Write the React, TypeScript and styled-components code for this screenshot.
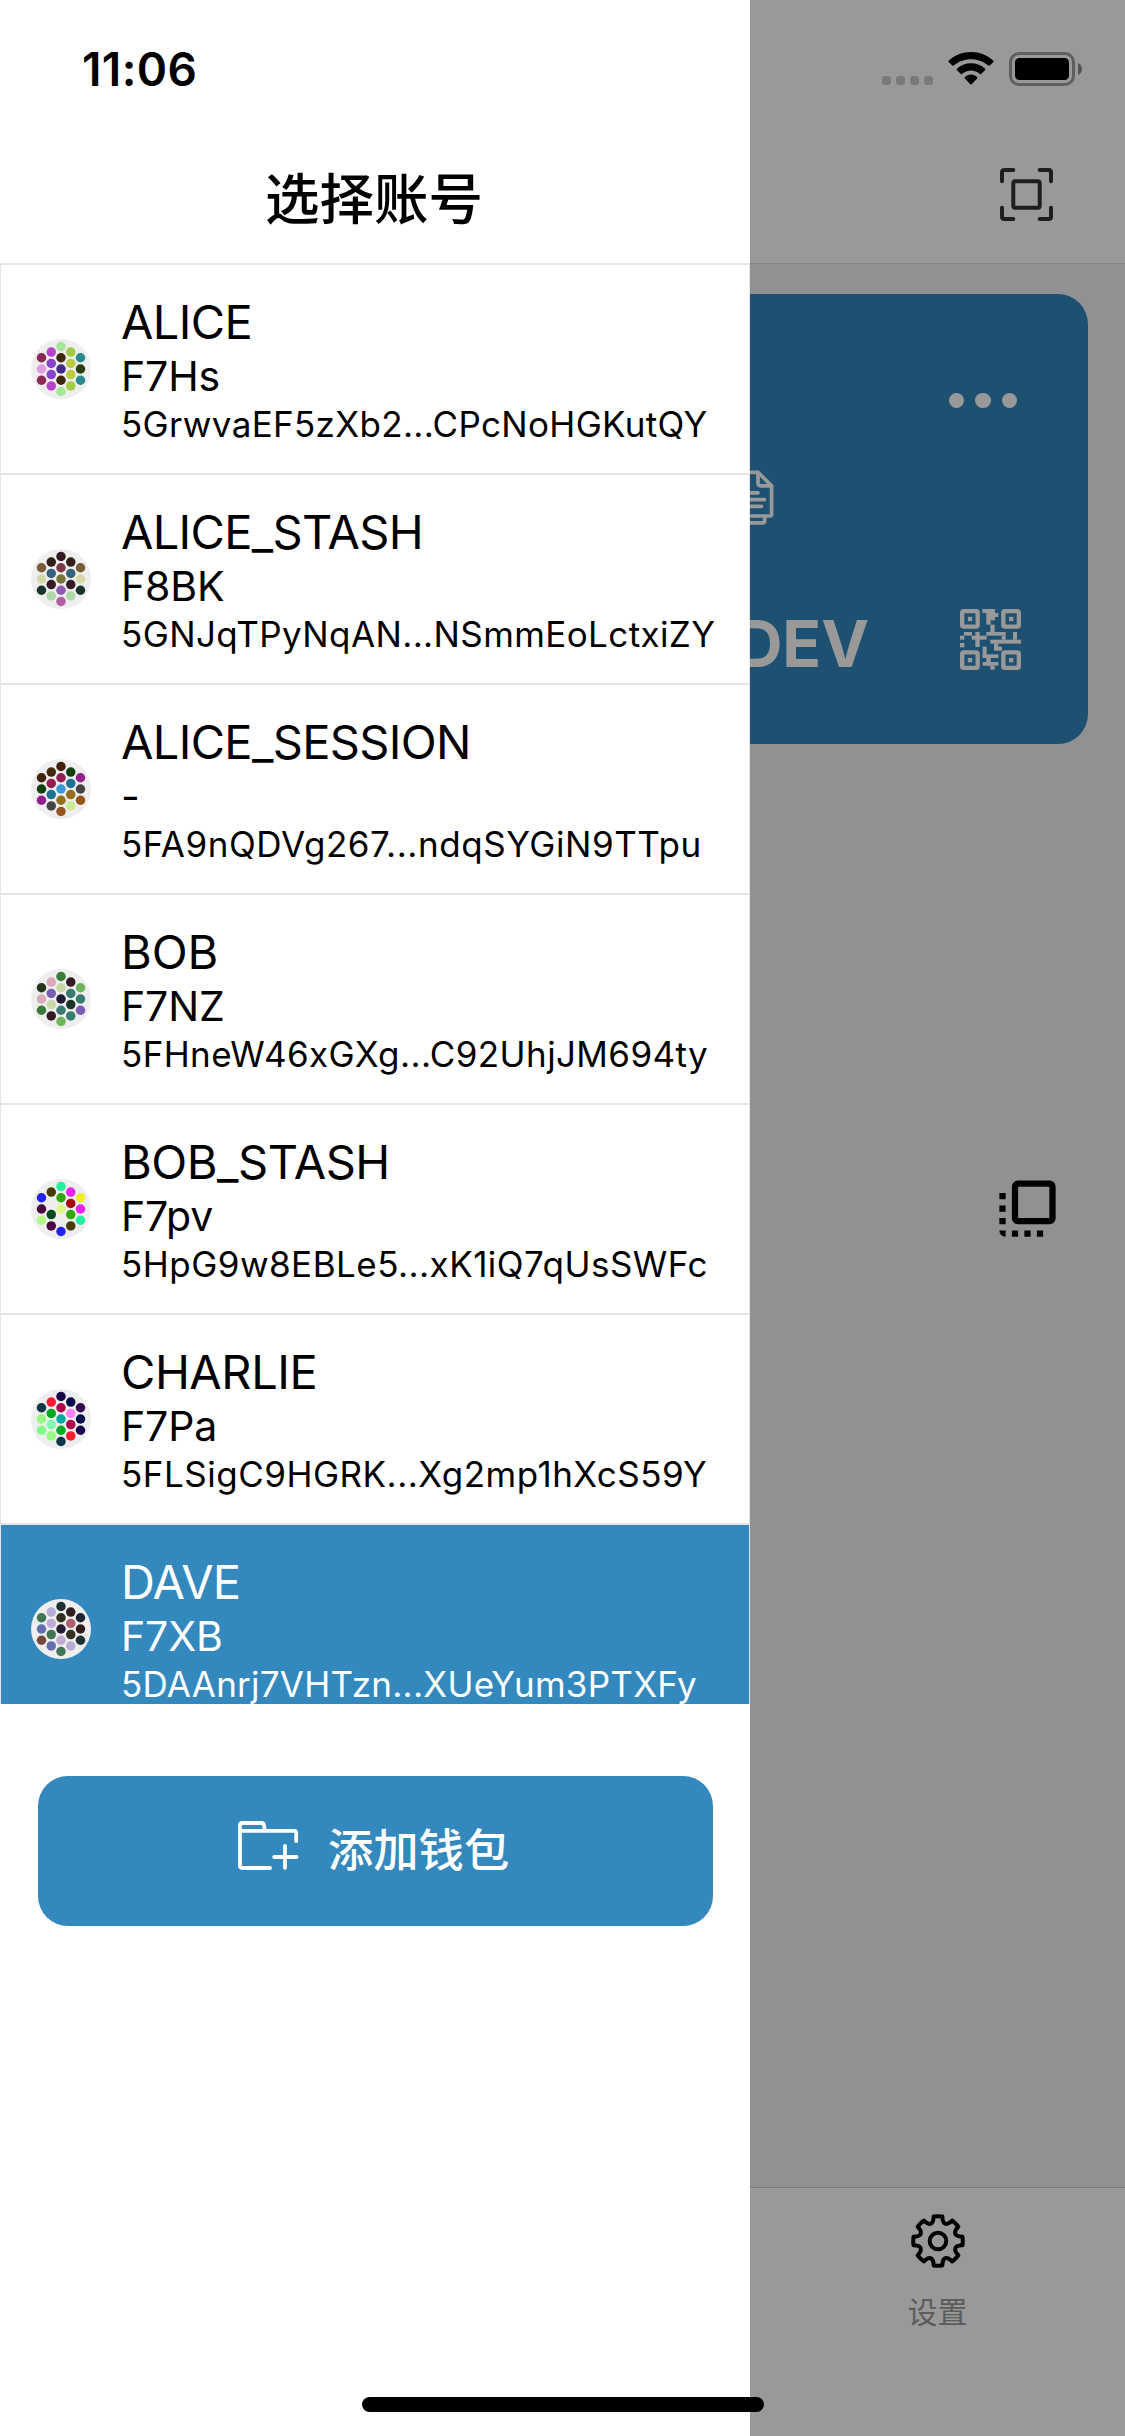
import React from "react";
import styled, { createGlobalStyle } from "styled-components";

const BLUE = "#3388bd";
const LINE = "#e5e5e5";

const GlobalStyle = createGlobalStyle`
  * { box-sizing: border-box; }
  body {
    margin: 0;
    background: #f2f2f7;
    font-family: Inter, "Liberation Sans", "Noto Sans CJK SC", sans-serif;
    color: #000;
  }
`;

const Phone = styled.div`
  position: relative;
  width: 1125px;
  height: 2436px;
  overflow: hidden;
`;

/* ---------- wallet page behind the drawer ---------- */

const Page = styled.div`
  display: flex;
  flex-direction: column;
  height: 100%;
  background: #f2f2f7;
`;

const NavBar = styled.header`
  display: flex;
  justify-content: flex-end;
  align-items: flex-end;
  height: 264px;
  padding: 0 72px 42px 0;
  background: #fff;
  border-bottom: 1px solid #e0e0e0;
`;

const Content = styled.main`
  flex: 1;
  padding: 30px 37px;
`;

const WalletCard = styled.section`
  display: flex;
  flex-direction: column;
  height: 450px;
  padding: 98.500px 67px 74px 60px;
  border-radius: 30px;
  background: ${BLUE};
  color: #fff;
`;

const CardRow = styled.div<{ $end?: number; $top?: string }>`
  display: flex;
  justify-content: flex-end;
  align-items: flex-end;
  margin-top: ${(p) => p.$top ?? "0"};
  padding-right: ${(p) => p.$end ?? 0}px;
`;

const MoreDots = styled.div`
  display: flex;
  gap: 11px;
`;

const MoreDot = styled.span`
  width: 15.4px;
  height: 15.4px;
  border-radius: 50%;
  background: #fff;
`;

const Unit = styled.span`
  margin-right: 91px;
  font-size: 64px;
  line-height: 53px;
  font-weight: 700;
`;

const TabBar = styled.nav`
  display: grid;
  grid-template-columns: repeat(3, 1fr);
  height: 249px;
  padding-top: 24px;
  background: #fff;
  border-top: 1px solid #cacaca;
`;

const Tab = styled.div`
  grid-column: 3;
  display: flex;
  flex-direction: column;
  align-items: center;
  gap: 20px;
  color: #999;
  font-size: 30px;
  line-height: 44px;
`;

const Scrim = styled.div`
  position: absolute;
  inset: 0;
  background: rgba(0, 0, 0, 0.4);
`;

const FloatingButton = styled.div`
  position: absolute;
  right: 60px;
  top: 1171px;
  width: 75px;
  height: 75px;
`;

/* ---------- drawer ---------- */

const Drawer = styled.aside`
  position: absolute;
  left: 0;
  top: 0;
  display: flex;
  flex-direction: column;
  width: 750px;
  height: 100%;
  background: #fff;
`;

const DrawerHeader = styled.header`
  display: flex;
  justify-content: center;
  align-items: flex-end;
  height: 264px;
  padding: 0 2px 24px 0;
  border-bottom: 1px solid ${LINE};
`;

const Title = styled.h1`
  margin: 0;
  font-size: 54.500px;
  line-height: 80px;
  font-weight: 500;
`;

const AccountList = styled.div`
  height: 1440px;
  overflow: hidden;
`;

const AccountRow = styled.div<{ $active?: boolean }>`
  display: flex;
  align-items: center;
  gap: 30px;
  height: 210px;
  padding: 0 30px;
  border: 1px solid ${LINE};
  background: ${(p) => (p.$active ? BLUE : "#fff")};
  color: ${(p) => (p.$active ? "#fff" : "#000")};
`;

const AccountText = styled.div`
  display: flex;
  flex-direction: column;
  white-space: nowrap;
`;

const Name = styled.span<{ $spacing: number }>`
  font-size: 47px;
  line-height: 57px;
  letter-spacing: ${(p) => p.$spacing}px;
`;

const Index = styled.span`
  font-size: 41px;
  line-height: 52px;
  letter-spacing: -0.1px;
`;

const Address = styled.span<{ $spacing: number }>`
  margin-top: 2px;
  font-size: 35px;
  line-height: 41px;
  letter-spacing: ${(p) => p.$spacing}px;
`;

const AddButton = styled.button`
  display: flex;
  align-items: center;
  gap: 29px;
  width: 675px;
  height: 150px;
  margin: 72px auto 0 38px;
  padding: 0 0 0 200px;
  border: 0;
  border-radius: 30px;
  background: ${BLUE};
  color: #fff;
  font-family: inherit;
  font-size: 45.3px;
  line-height: 66px;
  font-weight: 500;
`;

/* ---------- system chrome ---------- */

const StatusBar = styled.div`
  position: absolute;
  left: 0;
  top: 0;
  display: flex;
  justify-content: space-between;
  width: 100%;
  padding: 52px 43px 0 82px;
`;

const Clock = styled.span`
  font-size: 46px;
  line-height: 35px;
  font-weight: 600;
  letter-spacing: 0.4px;
`;

const StatusIcons = styled.div`
  display: flex;
  align-items: flex-end;
  height: 34px;
  gap: 15px;
`;

const SignalDots = styled.div`
  display: flex;
  gap: 5px;
  padding-bottom: 1px;
`;

const SignalDot = styled.span`
  width: 9px;
  height: 9px;
  border-radius: 3px;
  background: rgba(0, 0, 0, 0.2);
`;

const HomeIndicator = styled.div`
  position: absolute;
  left: 362px;
  bottom: 24px;
  width: 402px;
  height: 15px;
  border-radius: 8px;
  background: #000;
`;

/* ---------- icons ---------- */

const WifiIcon = () => (
  <svg width="46" height="34" viewBox="0 0 46 34">
    <path d="M23 0C31.500 0 39.400 3.200 45.400 8.700Q46 9.300 45.400 9.900L41.700 13.600Q41 14.200 40.400 13.600C35.700 9.600 29.600 7.200 23 7.200S10.300 9.600 5.600 13.600Q5 14.200 4.300 13.600L.6 9.900Q0 9.300.6 8.700C6.600 3.200 14.500 0 23 0Z" />
    <path d="M23 11.300C28.500 11.300 33.300 13.200 37.100 16.700Q37.800 17.400 37.100 18.100L33.100 22Q32.500 22.600 31.900 22C29.500 19.900 26.400 18.600 23 18.600S16.500 19.900 14.100 22Q13.500 22.600 12.900 22L8.900 18.100Q8.200 17.400 8.900 16.700C12.700 13.200 17.500 11.300 23 11.300Z" />
    <path d="M23 22.600C25.500 22.600 27.500 23.600 29.100 25.100Q29.800 25.800 29.100 26.500L23.700 32.300Q23 33 22.300 32.300L16.900 26.500Q16.200 25.800 16.900 25.100C18.500 23.600 20.500 22.600 23 22.600Z" />
  </svg>
);

const BatteryIcon = () => (
  <svg width="73" height="34" viewBox="0 0 73 34">
    <rect x="1.500" y="1.500" width="63" height="31" rx="8.500" fill="none" stroke="#000" strokeOpacity="0.38" strokeWidth="3" />
    <rect x="6" y="6" width="54" height="22" rx="4.500" />
    <path d="M69 11Q73 13 73 17T69 23Z" fillOpacity="0.45" />
  </svg>
);

const ScanIcon = () => (
  <svg width="53" height="53" viewBox="0 0 53 53" fill="none" stroke="#333" strokeWidth="4" strokeLinecap="round">
    <path d="M2 13.300V4.500Q2 2 4.500 2H13.300M39.700 2H48.500Q51 2 51 4.500V13.300M51 39.700V48.500Q51 51 48.500 51H39.700M13.300 51H4.500Q2 51 2 48.500V39.700" />
    <rect x="13.300" y="13.300" width="26.400" height="26.400" rx="2" />
  </svg>
);

const CopyIcon = () => (
  <svg width="46" height="56" viewBox="0 0 46 56" fill="none" stroke="#fff" strokeWidth="3.700" strokeLinecap="round" strokeLinejoin="round">
    <path d="M10.500 46V4.500Q10.500 2.300 12.700 2.300H30L43.600 15.800V44Q43.600 46 41.600 46Z" />
    <path d="M30 2.300V13Q30 15.800 32.800 15.800H43.600" />
    <path d="M17 22.800H30M17 29.600H36.500M17 36.300H33.500" />
    <path d="M3.500 9V50.500Q3.500 52.900 6 52.900H34.500Q36.700 52.900 36.700 50.700V47" />
  </svg>
);

const QR_MODULES: Array<[number, number, number, number]> = [
  [67, 0, 38, 12], [79, 12, 36, 12], [79, 24, 13, 23], [91, 24, 14, 10], [91, 47, 13, 22],
  [79, 69, 58, 11], [12, 69, 24, 11], [0, 80, 13, 12], [35, 80, 45, 12], [46, 69, 13, 45],
  [0, 102, 13, 13], [125, 80, 12, 12], [91, 92, 80, 12], [159, 69, 12, 23], [171, 92, 12, 12],
  [102, 103, 13, 22], [114, 113, 12, 12], [68, 113, 12, 34], [68, 136, 47, 11],
  [79, 147, 13, 23], [68, 159, 24, 11], [91, 159, 24, 11], [91, 170, 13, 12],
];

const QR_FINDERS: Array<[number, number]> = [[0, 0], [123.500, 0], [0, 123.500], [123.500, 123.500]];

const QrIcon = () => (
  <svg width="61" height="61" viewBox="0 0 183 183" fill="#fff">
    {QR_FINDERS.map(([x, y]) => (
      <g key={`${x}-${y}`} transform={`translate(${x} ${y})`}>
        <rect x="6.500" y="6.500" width="46.500" height="46.500" rx="5" fill="none" stroke="#fff" strokeWidth="13" />
        <rect x="23.500" y="23.500" width="13" height="13" />
      </g>
    ))}
    {QR_MODULES.map(([x, y, w, h]) => (
      <rect key={`${x}-${y}`} x={x} y={y} width={w} height={h} />
    ))}
  </svg>
);

const FlipIcon = () => (
  <svg width="75" height="75" viewBox="0 0 24 24">
    <path d="M3 13h2v-2H3v2zm0 4h2v-2H3v2zm2 4v-2H3c0 1.100.89 2 2 2zM3 9h2V7H3v2zm12 12h2v-2h-2v2zm4-18H9c-1.110 0-2 .9-2 2v10c0 1.100.89 2 2 2h10c1.100 0 2-.9 2-2V5c0-1.100-.9-2-2-2zm0 12H9V5h10v10zm-8 6h2v-2h-2v2zm-4 0h2v-2H7v2z" />
  </svg>
);

const polar = (deg: number, r: number) => {
  const a = ((deg - 90) * Math.PI) / 180;
  return `${(Math.cos(a) * r).toFixed(2)} ${(Math.sin(a) * r).toFixed(2)}`;
};

const gearOutline =
  Array.from({ length: 8 }, (_, i) => {
    const t = i * 45;
    return [
      `${i ? "L" : "M"}${polar(t - 10, 24.900)}`,
      `Q${polar(t, 25.100)} ${polar(t + 10, 24.900)}`,
      `Q${polar(t + 13, 20.200)} ${polar(t + 18, 19.200)}`,
      `Q${polar(t + 22.500, 18.300)} ${polar(t + 27, 19.200)}`,
      `Q${polar(t + 32, 20.200)} ${polar(t + 35, 24.900)}`,
    ].join("");
  }).join("") + "Z";

const GearIcon = () => (
  <svg width="58" height="58" viewBox="-29 -29 58 58" fill="none" stroke="#000" strokeWidth="4" strokeLinejoin="round">
    <path d={gearOutline} />
    <circle r="8.300" />
  </svg>
);

const FolderGlyph = styled.svg`
  flex: none;
  margin-bottom: 11px;
`;

const FolderIcon = () => (
  <FolderGlyph width="61" height="49" viewBox="0 0 61 49" fill="none" stroke="#fff" strokeWidth="3.800" strokeLinecap="round" strokeLinejoin="round">
    <path d="M32 47H4Q2 47 2 45V4Q2 2 4 2H23.500Q25.400 2 25.800 3.800L27 9.500" />
    <path d="M2.500 9.800H56.200Q58.200 9.800 58.200 11.800V20.200" />
    <path d="M47 25V46.800M36.200 36H58.500" />
  </FolderGlyph>
);

const DOT_GRID: Array<[number, number[]]> = [
  [-19.500, [-11.250, 0, 11.250]],
  [-9.750, [-16.900, -5.620, 5.620, 16.900]],
  [0, [-22.500, -11.250, 0, 11.250, 22.500]],
  [9.750, [-16.900, -5.620, 5.620, 16.900]],
  [19.500, [-11.250, 0, 11.250]],
];

const Identicon = ({ columns }: { columns: string[][] }) => (
  <svg width="60" height="60" viewBox="-30 -30 60 60">
    <circle r="30" fill="#eee" />
    {DOT_GRID.map(([x, ys], c) =>
      ys.map((y, r) => <circle key={`${x}${y}`} cx={x} cy={y} r="4.750" fill={columns[c][r]} />)
    )}
  </svg>
);

/* ---------- data ---------- */

interface Account {
  name: string;
  nameSpacing: number;
  index: string;
  address: string;
  spacing: number;
  active?: boolean;
  dots: string[][];
}

const accounts: Account[] = [
  {
    name: "ALICE", nameSpacing: -0.6, index: "F7Hs", address: "5GrwvaEF5zXb2...CPcNoHGKutQY", spacing: 0.33,
    dots: [
      ["#8b2858", "#e29de2", "#8b2858"],
      ["#b843cb", "#8743cb", "#8743cb", "#b843cb"],
      ["#a5e59c", "#3f2810", "#43288b", "#3f2810", "#a5e59c"],
      ["#a2cb43", "#b9cb43", "#b9cb43", "#a2cb43"],
      ["#288b8b", "#283f10", "#288b8b"],
    ],
  },
  {
    name: "ALICE_STASH", nameSpacing: -0.7, index: "F8BK", address: "5GNJqTPyNqAN...NSmmEoLctxiZY", spacing: 0.39,
    dots: [
      ["#7b5c38", "#d7d8a9", "#1a3528"],
      ["#351f19", "#38627b", "#351a28", "#afd8a9"],
      ["#351a22", "#7b3845", "#7b7438", "#8e5db3", "#b35da5"],
      ["#351f19", "#38627b", "#351a28", "#afd8a9"],
      ["#7b5c38", "#d7d8a9", "#1a3528"],
    ],
  },
  {
    name: "ALICE_SESSION", nameSpacing: -0.65, index: "-", address: "5FA9nQDVg267...ndqSYGiN9TTpu", spacing: 0.55,
    dots: [
      ["#41220e", "#143f0e", "#931e8e"],
      ["#41290e", "#931e56", "#1e7393", "#444444"],
      ["#41220e", "#931e56", "#3a9ad8", "#936f1e", "#93541e"],
      ["#143f0e", "#1e7393", "#936f1e", "#c9ec95"],
      ["#931e8e", "#444444", "#93541e"],
    ],
  },
  {
    name: "BOB", nameSpacing: -0.1, index: "F7NZ", address: "5FHneW46xGXg...C92UhjJM694ty", spacing: 0.39,
    dots: [
      ["#23351a", "#d8a9b7", "#3b7b3c"],
      ["#d8a9b7", "#7b5db3", "#c9d8a9", "#351a20"],
      ["#3b7b3c", "#c9d8a9", "#211a35", "#387b6f", "#70b35d"],
      ["#351a20", "#387b6f", "#1a3527", "#387b6f"],
      ["#70b35d", "#387b6f", "#7b5db3"],
    ],
  },
  {
    name: "BOB_STASH", nameSpacing: -0.45, index: "F7pv", address: "5HpG9w8EBLe5...xK1iQ7qUsSWFc", spacing: 0.47,
    dots: [
      ["#2323ef", "#470541", "#b5f786"],
      ["#473b05", "#eeeeee", "#05471c", "#470541"],
      ["#23efa1", "#33a60c", "#dff786", "#eeeeee", "#2323ef"],
      ["#e923ef", "#a60c0c", "#33a60c", "#473b05"],
      ["#efef23", "#e923ef", "#23efa1"],
    ],
  },
  {
    name: "CHARLIE", nameSpacing: -0.45, index: "F7Pa", address: "5FLSigC9HGRK...Xg2mp1hXcS59Y", spacing: 0.5,
    dots: [
      ["#02384a", "#96fb83", "#83fb88"],
      ["#fb1b31", "#05a71e", "#83fbae", "#96fb83"],
      ["#1a024a", "#ab0549", "#05aba0", "#05ab22", "#02384a"],
      ["#020e4a", "#fb83fb", "#ab0549", "#fb1b31"],
      ["#34024a", "#020e4a", "#1a024a"],
    ],
  },
  {
    name: "DAVE", nameSpacing: -0.7, index: "F7XB", address: "5DAAnrj7VHTzn...XUeYum3PTXFy", spacing: 0.25, active: true,
    dots: [
      ["#3f7654", "#626eae", "#764840"],
      ["#b9acd5", "#c2acd5", "#3f7654", "#626eae"],
      ["#1d3231", "#32301d", "#261d32", "#c2acd5", "#3f7654"],
      ["#321e1d", "#ae6270", "#32301d", "#b9acd5"],
      ["#1d2432", "#321e1d", "#1d3231"],
    ],
  },
];

export default function App() {
  return (
    <Phone>
      <GlobalStyle />
      <Page>
        <NavBar>
          <ScanIcon />
        </NavBar>
        <Content>
          <WalletCard>
            <CardRow $end={4}>
              <MoreDots>
                <MoreDot />
                <MoreDot />
                <MoreDot />
              </MoreDots>
            </CardRow>
            <CardRow $end={247} $top="62px">
              <CopyIcon />
            </CardRow>
            <CardRow $top="auto">
              <Unit>DEV</Unit>
              <QrIcon />
            </CardRow>
          </WalletCard>
        </Content>
        <TabBar>
          <Tab>
            <GearIcon />
            设置
          </Tab>
        </TabBar>
      </Page>
      <FloatingButton>
        <FlipIcon />
      </FloatingButton>
      <Scrim />
      <Drawer>
        <DrawerHeader>
          <Title>选择账号</Title>
        </DrawerHeader>
        <AccountList>
          {accounts.map((a) => (
            <AccountRow key={a.name} $active={a.active}>
              <Identicon columns={a.dots} />
              <AccountText>
                <Name $spacing={a.nameSpacing}>{a.name}</Name>
                <Index>{a.index}</Index>
                <Address $spacing={a.spacing}>{a.address}</Address>
              </AccountText>
            </AccountRow>
          ))}
        </AccountList>
        <AddButton>
          <FolderIcon />
          添加钱包
        </AddButton>
      </Drawer>
      <StatusBar>
        <Clock>11:06</Clock>
        <StatusIcons>
          <SignalDots>
            <SignalDot />
            <SignalDot />
            <SignalDot />
            <SignalDot />
          </SignalDots>
          <WifiIcon />
          <BatteryIcon />
        </StatusIcons>
      </StatusBar>
      <HomeIndicator />
    </Phone>
  );
}
